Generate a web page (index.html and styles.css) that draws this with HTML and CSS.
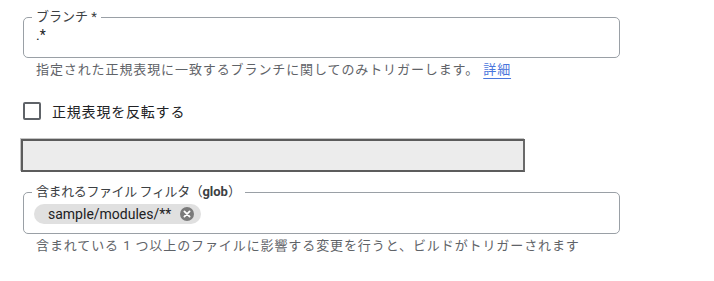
FILE: index.html
```html
<!DOCTYPE html>
<html lang="ja">
<head>
<meta charset="utf-8">
<link rel="stylesheet" href="styles.css">
</head>
<body>
<div class="form">
  <fieldset class="field">
    <legend class="field-label">ブランチ *</legend>
    <div class="field-value">.*</div>
  </fieldset>
  <div class="hint hint-first">指定された正規表現に一致するブランチに関してのみトリガーします。 <a class="link" href="#">詳細</a></div>

  <label class="check-row">
    <span class="checkbox"></span>
    <span class="check-label">正規表現を反転する</span>
  </label>

  <div class="disabled-box"></div>

  <fieldset class="field field-chips">
    <legend class="field-label field-label-tight">含まれるファイル フィルタ（<b class="glob">glob</b>）</legend>
    <div class="chips">
      <span class="chip">sample/modules/**
        <svg class="chip-remove" width="14" height="14" viewBox="0 0 14 14"><circle cx="7" cy="7" r="7" fill="#7a7a7a"/><path d="M4.4 4.4 L9.6 9.6 M9.6 4.4 L4.4 9.6" stroke="#fff" stroke-width="1.8" stroke-linecap="round"/></svg>
      </span>
    </div>
  </fieldset>
  <div class="hint">含まれている 1 つ以上のファイルに影響する変更を行うと、ビルドがトリガーされます</div>
</div>
</body>
</html>
```

FILE: styles.css
```css
html, body {
  margin: 0;
  padding: 0;
  background: #fff;
}
body {
  font-family: Roboto, "Noto Sans CJK JP", sans-serif;
  color: #202124;
}
.form {
  display: flex;
  flex-direction: column;
  align-items: flex-start;
  padding: 9px 0 0 23px;
  width: 597px;
}
.field {
  margin: 0;
  width: 100%;
  box-sizing: border-box;
  border: 1px solid #9aa0a6;
  border-radius: 5px;
  padding: 0 12px 12px 12px;
  min-inline-size: 0;
}
.field-label {
  font-size: 13px;
  line-height: 16px;
  padding: 0 4px;
  margin-left: -4px;
  color: #3c4043;
}
.field-label-tight {
  letter-spacing: -0.4px;
}
.glob {
  font-weight: 700;
  letter-spacing: 0;
}
.field-value {
  font-size: 14px;
  line-height: 20px;
  color: #202124;
}
.hint {
  font-size: 13px;
  line-height: 16px;
  color: #5f6368;
  margin-top: 4px;
  padding-left: 13px;
  letter-spacing: 0.9px;
}
.link {
  color: #4a76dc;
  text-decoration: underline;
  text-underline-offset: 4px;
  text-decoration-thickness: 1px;
}
.check-row {
  display: flex;
  align-items: center;
  margin-top: 23px;
  height: 20px;
}
.checkbox {
  width: 14px;
  height: 14px;
  border: 2px solid #5f6368;
  border-radius: 2px;
}
.check-label {
  font-size: 14px;
  margin-left: 11px;
  color: #202124;
  letter-spacing: 0.8px;
}
.disabled-box {
  margin-top: 18px;
  margin-left: -2px;
  width: 504px;
  height: 33px;
  box-sizing: border-box;
  background: #ececec;
  border-top: 2px solid #5c5c5c;
  border-left: 2px solid #5c5c5c;
  border-right: 2px solid #6a6a6a;
  border-bottom: 2px solid #5c5c5c;
  box-shadow: -1px -1px 0 #c4c4c4;
}
.field-chips {
  margin-top: 12px;
  padding: 0 10px 9px 10px;
}
.field-chips .field-label {
  margin-left: -2px;
}
.chips {
  display: flex;
  padding-top: 4px;
}
.chip {
  display: inline-flex;
  align-items: center;
  height: 20px;
  padding: 0 7px 0 14px;
  border-radius: 10px;
  background: #e0e0e0;
  font-size: 14px;
  color: #202124;
}
.chip-remove {
  margin-left: 9px;
}
```
